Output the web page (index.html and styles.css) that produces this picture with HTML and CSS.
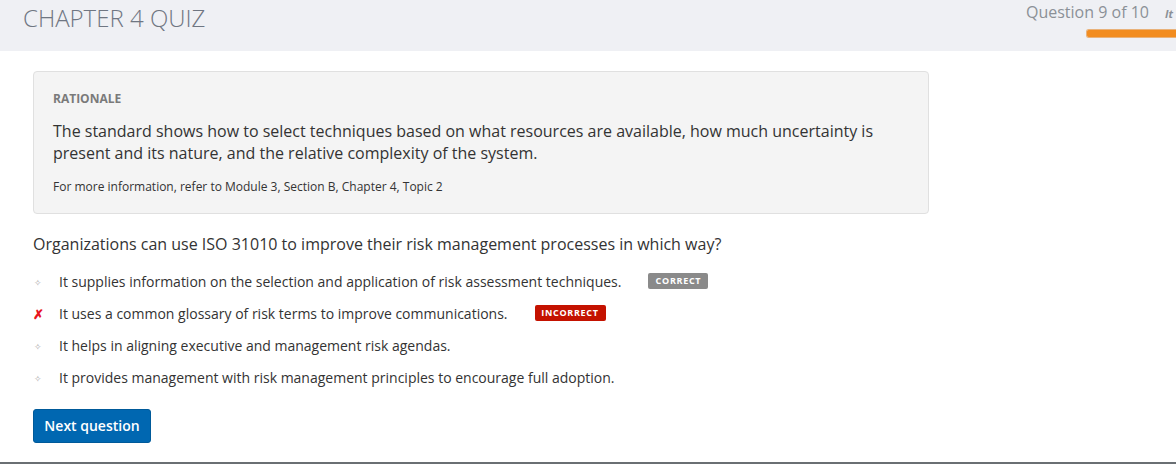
FILE: index.html
```html
<!DOCTYPE html>
<html>
<head>
<meta charset="utf-8">
<link rel="stylesheet" href="styles.css">
</head>
<body>
<header class="topbar">
  <h1 class="title">CHAPTER 4 QUIZ</h1>
  <div class="progress">
    <div class="progress-row">
      <span class="progress-text">Question 9 of 10</span>
      <span class="progress-item">It</span>
    </div>
    <div class="progress-bar"></div>
  </div>
</header>
<main class="content">
  <section class="rationale">
    <div class="rationale-label">RATIONALE</div>
    <p class="rationale-text">The standard shows how to select techniques based on what resources are available, how much uncertainty is present and its nature, and the relative complexity of the system.</p>
    <p class="rationale-ref">For more information, refer to Module 3, Section B, Chapter 4, Topic 2</p>
  </section>
  <p class="question">Organizations can use ISO 31010 to improve their risk management processes in which way?</p>
  <ul class="options">
    <li class="option"><span class="marker dot">&#x2727;</span><span class="opt-text">It supplies information on the selection and application of risk assessment techniques.</span><span class="badge badge-correct">CORRECT</span></li>
    <li class="option"><span class="marker cross">&#x2717;</span><span class="opt-text">It uses a common glossary of risk terms to improve communications.</span><span class="badge badge-incorrect">INCORRECT</span></li>
    <li class="option"><span class="marker dot">&#x2727;</span><span class="opt-text">It helps in aligning executive and management risk agendas.</span></li>
    <li class="option"><span class="marker dot">&#x2727;</span><span class="opt-text">It provides management with risk management principles to encourage full adoption.</span></li>
  </ul>
  <button class="next-btn">Next question</button>
</main>
<div class="bottom-line"></div>
</body>
</html>
```
FILE: styles.css
```css
* { box-sizing: border-box; }
html, body { margin: 0; padding: 0; }
body {
  width: 1176px;
  height: 464px;
  overflow: hidden;
  font-family: "Open Sans", "Liberation Sans", sans-serif;
  background: #ffffff;
  color: #333333;
  position: relative;
}
.topbar {
  height: 51px;
  background: #eff0f4;
  display: flex;
  justify-content: space-between;
  align-items: flex-start;
  overflow: hidden;
}
.title {
  margin: 0;
  padding: 2px 0 0 23px;
  font-size: 24px;
  font-weight: 300;
  color: #6f7682;
  line-height: 32px;
  letter-spacing: 0;
}
.progress {
  display: flex;
  flex-direction: column;
  align-items: flex-end;
  width: 150px;
  padding-top: 1px;
}
.progress-row {
  display: flex;
  align-items: baseline;
  gap: 16px;
  white-space: nowrap;
  width: 150px;
}
.progress-text {
  font-size: 16px;
  color: #8b9097;
  line-height: 22px;
}
.progress-item {
  font-size: 11px;
  font-style: italic;
  font-weight: 700;
  color: #8b9097;
}
.progress-bar {
  margin-top: 6px;
  width: 90px;
  height: 9px;
  background: #f28c1f;
  border: 1px solid #e9b27a;
  border-right: none;
  border-radius: 3px 0 0 3px;
}
.content {
  padding: 20px 0 0 33px;
}
.rationale {
  width: 896px;
  height: 143px;
  background: #f4f4f4;
  border: 1px solid #e0e0e0;
  border-radius: 4px;
  padding: 19px 19px 0 19px;
}
.rationale-label {
  font-size: 12px;
  font-weight: 700;
  color: #7a7a7a;
  line-height: 16px;
}
.rationale-text {
  margin: 13px 0 0 0;
  font-size: 16px;
  line-height: 22px;
  color: #333333;
}
.rationale-ref {
  margin: 15px 0 0 0;
  font-size: 12px;
  line-height: 16px;
  color: #333333;
}
.question {
  margin: 19px 0 0 0;
  font-size: 16px;
  line-height: 22px;
  color: #333333;
}
.options {
  list-style: none;
  margin: 11px 0 0 0;
  padding: 0;
}
.option {
  display: flex;
  align-items: center;
  height: 32px;
  font-size: 14px;
  color: #333333;
}
.marker {
  width: 26px;
  flex: none;
  font-size: 9px;
  padding-left: 0;
}
.marker.dot {
  color: #aaaaaa;
  padding-left: 1px;
}
.marker.cross {
  color: #e8141e;
  font-size: 13px;
  font-weight: 700;
}
.opt-text {
  line-height: 20px;
}
.badge {
  display: inline-block;
  margin-left: 27px;
  font-size: 9px;
  font-weight: 700;
  letter-spacing: 0.7px;
  color: #ffffff;
  line-height: 16px;
  height: 16px;
  padding: 0;
  border-radius: 2px;
  margin-top: -2px;
}
.badge-correct {
  background: #8a8a8a;
  width: 60px;
  text-align: center;
}
.badge-incorrect {
  background: #c41200;
  width: 71px;
  text-align: center;
}
.next-btn {
  margin-top: 15px;
  width: 118px;
  height: 34px;
  background: #0067b1;
  border: 1px solid #005a9a;
  border-radius: 3px;
  color: #ffffff;
  font-family: "Open Sans", "Liberation Sans", sans-serif;
  font-size: 14px;
  font-weight: 600;
  padding: 0 0 1px 0;
}
.bottom-line {
  position: absolute;
  left: 0;
  right: 0;
  bottom: 0;
  height: 2px;
  background: #6a6f73;
}
```
